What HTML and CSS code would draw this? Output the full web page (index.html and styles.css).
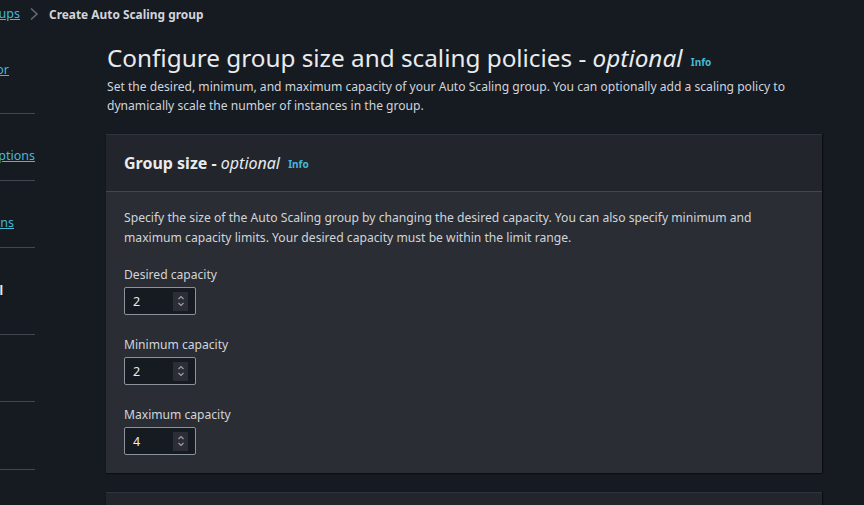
FILE: index.html
```html
<!DOCTYPE html>
<html>
<head>
<meta charset="utf-8">
<link rel="stylesheet" href="styles.css">
</head>
<body>
<div class="crumbs">
  <span class="crumb-clip"><a class="crumb-link" href="#">Auto Scaling groups</a></span>
  <svg class="chev" width="10" height="14" viewBox="0 0 10 14"><path d="M2 1.5 L8 7 L2 12.5" fill="none" stroke="#5f6b7a" stroke-width="1.6"/></svg>
  <span class="crumb-current">Create Auto Scaling group</span>
</div>
<div class="layout">
  <nav class="nav">
    <div class="nav-item first"><div class="nav-line end-9"><a href="#">Choose launch template or</a></div></div>
    <div class="nav-item"><div class="nav-line"><a href="#">Choose instance launch options</a></div></div>
    <div class="nav-item"><div class="nav-line end-14"><a href="#">Configure advanced options</a></div></div>
    <div class="nav-item tall"><div class="nav-line end-3"><span class="current">Configure group size and scaling - optional</span></div></div>
    <div class="nav-item"></div>
    <div class="nav-item last"></div>
  </nav>
  <main class="main">
    <h1 class="title">Configure group size and scaling policies - <i>optional</i> <a class="info" href="#">Info</a></h1>
    <p class="desc">Set the desired, minimum, and maximum capacity of your Auto Scaling group. You can optionally add a scaling policy to dynamically scale the number of instances in the group.</p>
    <section class="card">
      <div class="card-head">
        <h2 class="card-title">Group size - <i>optional</i> <a class="info" href="#">Info</a></h2>
      </div>
      <div class="card-body">
        <p class="card-desc">Specify the size of the Auto Scaling group by changing the desired capacity. You can also specify minimum and maximum capacity limits. Your desired capacity must be within the limit range.</p>
        <div class="field">
          <label class="label">Desired capacity</label>
          <div class="num"><span class="val">2</span><span class="spin"><svg width="8" height="12" viewBox="0 0 8 12"><path d="M1.5 4 L4 1.5 L6.5 4 M1.5 8 L4 10.5 L6.5 8" fill="none" stroke="#9ba3ab" stroke-width="1.1"/></svg></span></div>
        </div>
        <div class="field">
          <label class="label">Minimum capacity</label>
          <div class="num"><span class="val">2</span><span class="spin"><svg width="8" height="12" viewBox="0 0 8 12"><path d="M1.5 4 L4 1.5 L6.5 4 M1.5 8 L4 10.5 L6.5 8" fill="none" stroke="#9ba3ab" stroke-width="1.1"/></svg></span></div>
        </div>
        <div class="field">
          <label class="label">Maximum capacity</label>
          <div class="num"><span class="val">4</span><span class="spin"><svg width="8" height="12" viewBox="0 0 8 12"><path d="M1.5 4 L4 1.5 L6.5 4 M1.5 8 L4 10.5 L6.5 8" fill="none" stroke="#9ba3ab" stroke-width="1.1"/></svg></span></div>
        </div>
      </div>
    </section>
    <section class="card next"></section>
  </main>
</div>
</body>
</html>
```
FILE: styles.css
```css
* { box-sizing: border-box; }
html, body { margin: 0; padding: 0; }
body {
  background: #161a21;
  color: #d1d5db;
  font-family: "Noto Sans", "Open Sans", sans-serif;
  font-size: 12.1px;
  width: 864px;
  height: 505px;
  overflow: hidden;
}
a { color: #44b9d6; }
.crumbs {
  height: 26px;
  display: flex;
  align-items: center;
  padding-top: 1px;
  white-space: nowrap;
}
.crumb-clip {
  width: 20px;
  overflow: hidden;
  display: flex;
  justify-content: flex-end;
  flex: none;
}
.crumb-link { font-size: 12.5px; text-decoration: underline; flex: none; }
.chev { margin: 0 10px 0 9px; flex: none; }
.crumb-current { font-weight: 700; color: #d1d5db; font-size: 11.9px; }
.layout { display: flex; }
.nav { width: 35px; flex: none; overflow: hidden; }
.nav-item {
  height: 67px;
  border-bottom: 1px solid #414750;
  padding-top: 32px;
}
.nav-item.first { height: 88px; padding-top: 34px; }
.nav-item.tall { height: 87px; padding-top: 33px; }
.nav-item.last { height: 68px; }
.nav-line {
  height: 20px;
  line-height: 20px;
  display: flex;
  justify-content: flex-end;
  white-space: nowrap;
}
.nav-line > * { flex: none; }
.nav-line.end-9 { padding-right: 26px; }
.nav-line.end-14 { padding-right: 21px; }
.nav-line.end-3 { padding-right: 32px; }
.nav-line a { font-size: 12.5px; text-decoration: underline; }
.current { font-weight: 700; color: #e9ebed; }
.main { flex: none; width: 716px; margin-left: 71px; }
.title {
  margin: 16px 0 0 1px;
  font-size: 24.3px;
  font-weight: 400;
  line-height: 32px;
  color: #e9ebed;
}
.info { font-size: 10px; font-weight: 700; text-decoration: none; margin-left: 2px; vertical-align: 1px; }
.desc {
  margin: -1px 0 0 1px;
  line-height: 19px;
  font-size: 12.1px;
}
.card {
  margin-top: 19px;
  background: #2a2d33;
  border-top: 1px solid #30343c;
  box-shadow: 0 1px 1px #0c0e12, 1px 0 1px #0c0e12;
}
.card-head {
  background: #22252c;
  height: 57px;
  border-bottom: 1px solid #414750;
  display: flex;
  align-items: center;
  padding-left: 18px;
}
.card-title {
  margin: 0;
  font-size: 16px;
  font-weight: 700;
  color: #e9ebed;
}
.card-title i { font-weight: 400; }
.card-title .info { margin-left: 4px; }
.card-body { padding: 16px 18px 18px; }
.card-desc { margin: 0 0 17px; line-height: 20px; font-size: 12.15px; }
.field + .field { margin-top: 20px; }
.label { display: block; line-height: 20px; font-size: 12.1px; }
.num {
  margin-top: 2px;
  width: 72px;
  height: 28px;
  border: 1px solid #8c949b;
  border-radius: 2px;
  background: #161a21;
  display: flex;
  align-items: center;
  padding-left: 8px;
}
.val { flex: 1; color: #e9ebed; font-size: 12.5px; }
.spin {
  width: 15px;
  height: 19px;
  background: #2c2d37;
  display: flex;
  align-items: center;
  justify-content: center;
  margin-right: 7px;
}
.card.next {
  margin-top: 19px;
  height: 13px;
  background: #22252c;
}
```
